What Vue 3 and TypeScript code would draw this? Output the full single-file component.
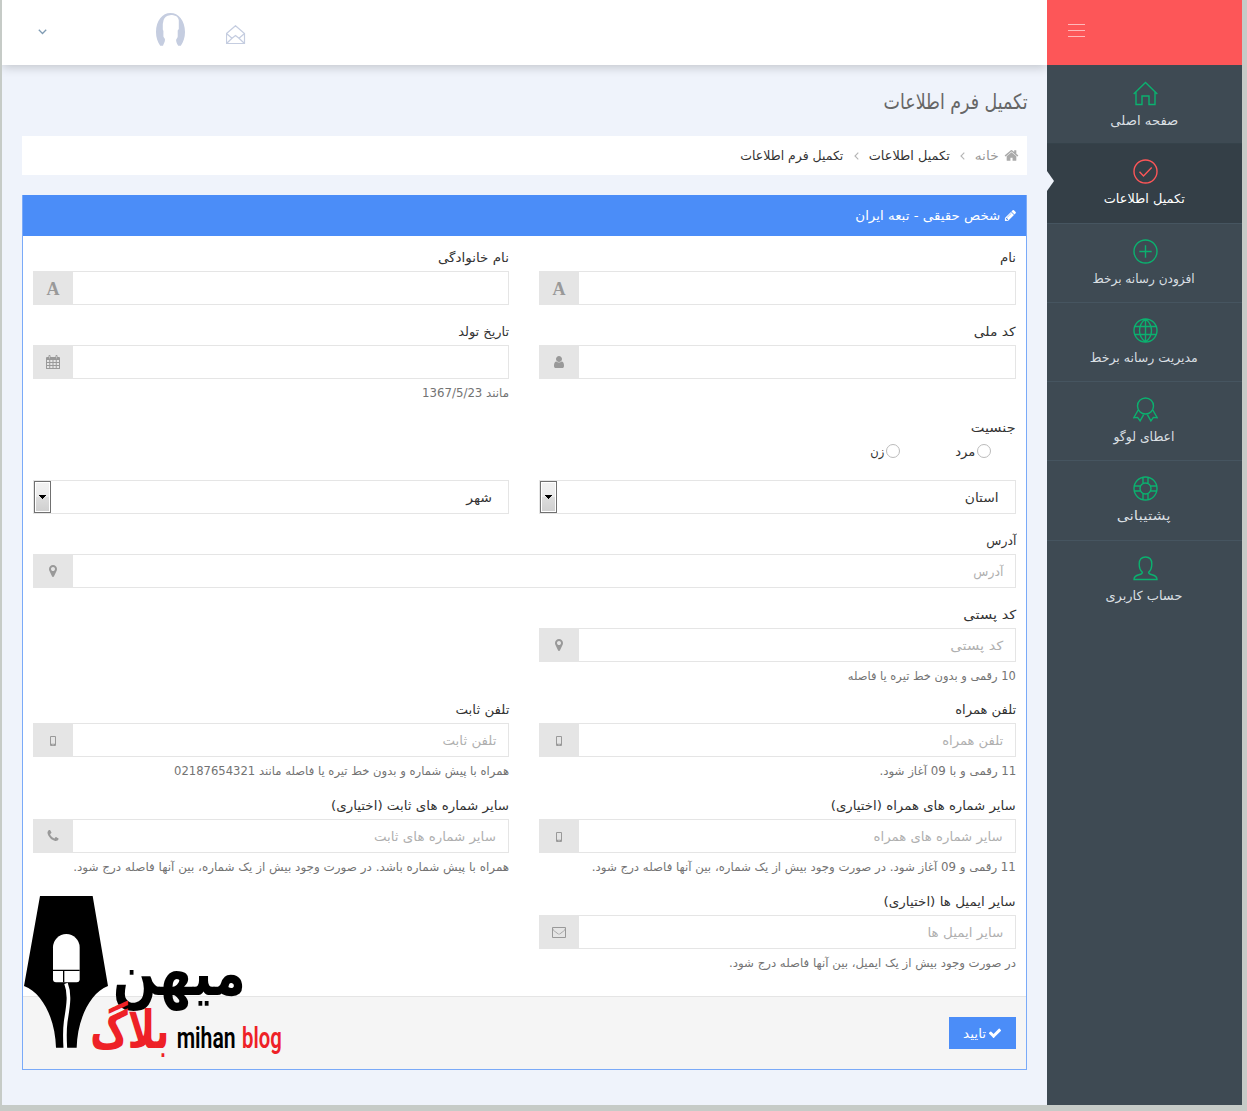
<script setup lang="ts">
interface Field {
  label: string
  labelWidth: number
  icon: string
  placeholder?: string
  placeholderWidth?: number
  help?: string
  helpWidth?: number
  wide?: boolean
  start?: boolean
}

// Condenses a run of text horizontally so that it takes the given width.
const vFit = {
  mounted(el: HTMLElement, binding: { value?: number }) {
    if (!binding.value) return
    const natural = el.getBoundingClientRect().width
    el.style.transform = `scaleX(${binding.value / natural})`
    el.style.marginLeft = `${binding.value - natural}px`
  },
}

const nav = [
  { text: 'صفحه اصلی', width: 68, icon: 'home' },
  { text: 'تکمیل اطلاعات', width: 81, icon: 'check', active: true },
  { text: 'افزودن رسانه برخط', width: 102, icon: 'plus' },
  { text: 'مدیریت رسانه برخط', width: 108, icon: 'globe' },
  { text: 'اعطای لوگو', width: 61, icon: 'award' },
  { text: 'پشتیبانی', width: 54, icon: 'help' },
  { text: 'حساب کاربری', width: 77, icon: 'user' },
]

const navPaths: Record<string, string> = {
  home: 'M.7 13.1 12.5 1.4l11.800 11.700M3 11V23.500h6v-8.500h7v8.500h6V11',
  check: 'M24 12.5a11.5 11.5 0 1 1-23 0a11.5 11.5 0 1 1 23 0M6.500 12.800l4 4.200 8.200-8.400',
  plus: 'M24 12.5a11.5 11.5 0 1 1-23 0a11.5 11.5 0 1 1 23 0M12.500 6.300v12.400M6.300 12.500h12.400',
  globe: 'M24 12.5a11.5 11.5 0 1 1-23 0a11.5 11.5 0 1 1 23 0M12.500 1v23M2 8.500h21M2 16.500h21M12.500 1C4.500 7 4.500 18 12.500 24M12.500 1c8 6 8 17 0 23',
  award: 'M20.500 9a8 8 0 1 1-16 0a8 8 0 1 1 16 0M5.200 13 .8 20.700l3.800-.3 2.500 3.500 4-7M19.800 13l4.400 7.700-3.800-.3-2.500 3.500-4-7',
  help: 'M24 12.5a11.5 11.5 0 1 1-23 0a11.5 11.5 0 1 1 23 0M18 12.500a5.500 5.500 0 1 1-11 0a5.500 5.500 0 1 1 11 0M10 1.300v6.300M15 1.300v6.300M10 17.400v6.300M15 17.400v6.300M1.300 10h6.300M1.300 15h6.300M17.400 10h6.300M17.400 15h6.300',
  user: 'M9.400 16.200C7 14.300 6.200 11.500 6.200 8 6.200 3.400 8.500 1 12.500 1s6.300 2.400 6.300 7c0 3.500-.8 6.300-3.200 8.200 0 1.400 1 2 3.400 2.600 3.500.9 5 1.800 5 4.700H1c0-2.900 1.500-3.800 5-4.700 2.400-.6 3.400-1.200 3.400-2.600z',
}

const firstRows: Field[] = [
  { label: 'نام', labelWidth: 16, icon: 'font' },
  { label: 'نام خانوادگی', labelWidth: 71, icon: 'font' },
  { label: 'کد ملی', labelWidth: 42, icon: 'user' },
  { label: 'تاریخ تولد', labelWidth: 51, icon: 'calendar', help: 'مانند 1367/5/23', helpWidth: 87 },
]

const lastRows: Field[] = [
  { label: 'آدرس', labelWidth: 30, icon: 'marker', placeholder: 'آدرس', placeholderWidth: 30, wide: true },
  { label: 'کد پستی', labelWidth: 53, icon: 'marker', placeholder: 'کد پستی', placeholderWidth: 53, help: '10 رقمی و بدون خط تیره یا فاصله', helpWidth: 168, start: true },
  { label: 'تلفن همراه', labelWidth: 61, icon: 'mobile', placeholder: 'تلفن همراه', placeholderWidth: 61, help: '11 رقمی و با 09 آغاز شود.', helpWidth: 137, start: true },
  { label: 'تلفن ثابت', labelWidth: 54, icon: 'mobile', placeholder: 'تلفن ثابت', placeholderWidth: 54, help: 'همراه با پیش شماره و بدون خط تیره یا فاصله مانند 02187654321', helpWidth: 335 },
  { label: 'سایر شماره های همراه (اختیاری)', labelWidth: 185, icon: 'mobile', placeholder: 'سایر شماره های همراه', placeholderWidth: 129, help: '11 رقمی و 09 آغاز شود. در صورت وجود بیش از یک شماره، بین آنها فاصله درج شود.', helpWidth: 424 },
  { label: 'سایر شماره های ثابت (اختیاری)', labelWidth: 178, icon: 'phone', placeholder: 'سایر شماره های ثابت', placeholderWidth: 122, help: 'همراه با پیش شماره باشد. در صورت وجود بیش از یک شماره، بین آنها فاصله درج شود.', helpWidth: 436 },
  { label: 'سایر ایمیل ها (اختیاری)', labelWidth: 132, icon: 'envelope', placeholder: 'سایر ایمیل ها', placeholderWidth: 76, help: 'در صورت وجود بیش از یک ایمیل، بین آنها فاصله درج شود.', helpWidth: 287, start: true },
]

const solid: Record<string, string> = {
  user: 'M1536 1399q0 109-62.5 187t-150.5 78h-854q-88 0-150.5-78t-62.5-187q0-85 8.5-160.5t31.5-152 58.5-131 94-89 134.5-34.5q131 128 313 128t313-128q76 0 134.5 34.5t94 89 58.5 131 31.5 152 8.5 160.5zm-256-887q0 159-112.5 271.5t-271.5 112.5-271.5-112.5-112.5-271.5 112.5-271.5 271.5-112.5 271.5 112.5 112.5 271.5z',
  marker: 'M1152 640q0-106-75-181t-181-75-181 75-75 181 75 181 181 75 181-75 75-181zm256 0q0 109-33 179l-364 774q-16 33-47.5 52t-67.5 19-67.5-19-46.5-52l-365-774q-33-70-33-179 0-212 150-362t362-150 362 150 150 362z',
  phone: 'M1600 1240q0 27-10 70.5t-21 68.5q-21 50-122 106-94 51-186 51-27 0-52.5-3.5t-57.5-12.5-47.5-14.5-55.5-20.5-49-18q-98-35-175-83-128-79-264.500-215.500t-215.500-264.500q-48-77-83-175-3-9-18-49t-20.500-55.500-14.500-47.500-12.500-57.500-3.500-52.500q0-92 51-186 56-101 106-122 25-11 68.500-21t70.500-10q14 0 21 3 18 6 53 76 11 19 30 54t35 63.500 31 53.500q3 4 17.500 25t21.500 35.500 7 28.500q0 20-28.500 50t-62 55-62 53-28.500 46q0 9 5 22.500t8.500 20.500 14 24 11.500 19q76 137 174 235t235 174q2 1 19 11.500t24 14 20.500 8.500 22.500 5q18 0 46-28.500t53-62 55-62 50-28.500q14 0 28.500 7t35.500 21.500 25 17.500q25 15 53.500 31t63.500 35 54 30q70 35 76 53 3 7 3 21z',
  mobile: 'M512 512q0-128 128-128h512q128 0 128 128v1024q0 128-128 128H640q-128 0-128-128zM640 520v870h512V520zM840 1450v110h112v-110z',
  calendar: 'M0 1728V384q0-128 128-128h192V128Q320 0 448 0t128 128v128h640V128q0-128 128-128t128 128v128h192q128 0 128 128v1344q0 64-64 64H64q-64 0-64-64zM128 640v256h288V640zm416 0v256h288V640zm416 0v256h288V640zm416 0v256h288V640zM128 1024v256h288v-256zm416 0v256h288v-256zm416 0v256h288v-256zm416 0v256h288v-256zM128 1408v256h288v-256zm416 0v256h288v-256zm416 0v256h288v-256zm416 0v256h288v-256zM416 140v300h64V140zm896 0v300h64V140z',
  envelope: 'M0 384q0-128 128-128h1536q128 0 128 128v1152q0 128-128 128H128q-128 0-128-128zM128 640v864q0 32 32 32h1472q32 0 32-32V640q-170 190-560 480-110 90-208 90t-208-90Q298 830 128 640zM128 384v40q0 170 216 330 180 130 400 310 90 80 152 80t152-80q220-180 400-310 216-160 216-330v-40z',
}
</script>

<template>
  <div class="page">
    <aside class="sidebar">
      <div class="brand"><span class="burger"><i /><i /><i /></span></div>
      <nav>
        <a v-for="item in nav" :key="item.icon" class="nav-item" :class="{ active: item.active }">
          <svg viewBox="0 0 25 25" width="25" height="25"><path :d="navPaths[item.icon]" /></svg>
          <span class="nav-text"><span v-fit="item.width" class="t">{{ item.text }}</span></span>
        </a>
      </nav>
    </aside>
    <div class="main">
      <header class="topbar">
        <svg class="chevron" viewBox="0 0 9 6" width="9" height="6"><path d="M.8.8 4.500 4.500 8.200.8" /></svg>
        <svg class="avatar" viewBox="0 0 29 33" width="29" height="33">
          <path d="M14.500 0C22.500 0 29 7.500 29 19c0 5.500-1.600 10-4.200 13.800h-2.600c-.6-1.500-2-3-2.100-5.600 0-1.400 1.600-2 1.600-3.600V17.500l1.100-1.500V7.500C22.800 5.500 21 3 19 2.800 17 1.600 15.500 1.800 14 2.300 10.500 2.800 8.500 4.500 7.600 7L6.800 11v5.500l.6 1.500v5.500c.3 1.200 1.600 1.800 1.600 3.300 0 2.400-1.600 4.200-2 6H4.200C1.600 29 0 24.500 0 19 0 7.500 6.500 0 14.500 0z" />
        </svg>
        <svg class="mail" viewBox="0 0 20 20" width="20" height="20">
          <path d="M.5 8.500 9.500.7l9 7.800V18.500H.5zM.5 8.500l5.500 4.800M18.500 8.500l-5.500 4.800M.5 18.500l5.500-5.200 3.500-2.800 3.500 2.800 5.500 5.200" />
        </svg>
      </header>
      <main class="content">
        <h1><span v-fit="144" class="t">تکمیل فرم اطلاعات</span></h1>
        <div class="crumbs">
          <svg class="house" viewBox="0 0 1792 1792" width="15" height="15"><path d="M1472 992v480q0 26-19 45t-45 19h-384v-384h-256v384h-384q-26 0-45-19t-19-45v-480q0-1 .5-3t.5-3l575-474 575 474q1 2 1 6zm223-69l-62 74q-8 9-21 11h-3q-13 0-21-7l-692-577-692 577q-12 8-24 7-13-2-21-11l-62-74q-8-10-7-23.500t11-21.500l719-599q32-26 76-26t76 26l244 204v-195q0-14 9-23t23-9h192q14 0 23 9t9 23v408l219 182q10 8 11 21.500t-7 23.500z" /></svg>
          <span v-fit="24" class="t muted">خانه</span>
          <svg class="angle" viewBox="0 0 5 8" width="5" height="8"><path d="M4.300.700 1 4l3.300 3.300" /></svg>
          <span v-fit="81" class="t">تکمیل اطلاعات</span>
          <svg class="angle second" viewBox="0 0 5 8" width="5" height="8"><path d="M4.300.700 1 4l3.300 3.300" /></svg>
          <span v-fit="103" class="t">تکمیل فرم اطلاعات</span>
        </div>
        <section class="panel">
          <div class="panel-head">
            <svg viewBox="0 0 1792 1792" width="13" height="13"><path d="M491 1536l91-91-235-235-91 91v107h128v128h107zm523-928q0-22-22-22-10 0-17 7l-542 542q-7 7-7 17 0 22 22 22 10 0 17-7l542-542q7-7 7-17zm-54-192l416 416-832 832h-416v-416zm683 96q0 53-37 90l-166 166-416-416 166-165q36-38 90-38 53 0 91 38l235 234q37 39 37 91z" /></svg>
            <span v-fit="145" class="t">شخص حقیقی - تبعه ایران</span>
          </div>
          <form class="form">
            <div v-for="f in firstRows" :key="f.label" class="group">
              <label><span v-fit="f.labelWidth" class="t">{{ f.label }}</span></label>
              <div class="control">
                <div class="box" />
                <div class="addon">
                  <b v-if="f.icon === 'font'">A</b>
                  <svg v-else viewBox="0 0 1792 1792" width="14" height="14"><path fill-rule="evenodd" :d="solid[f.icon]" /></svg>
                </div>
              </div>
              <p v-if="f.help" class="help"><span v-fit="f.helpWidth" class="t">{{ f.help }}</span></p>
            </div>
            <div class="group wide">
              <label><span v-fit="45" class="t">جنسیت</span></label>
              <div class="radios">
                <span class="radio"><i /><span v-fit="20" class="t">مرد</span></span>
                <span class="radio"><i /><span v-fit="14" class="t">زن</span></span>
              </div>
            </div>
            <div class="select"><span v-fit="34" class="t">استان</span><span class="arrow"><svg viewBox="0 0 7 4" width="7" height="4"><path d="M0 0h7v1H6v1H5v1H4v1H3V3H2V2H1V1H0z" /></svg></span></div>
            <div class="select"><span v-fit="26" class="t">شهر</span><span class="arrow"><svg viewBox="0 0 7 4" width="7" height="4"><path d="M0 0h7v1H6v1H5v1H4v1H3V3H2V2H1V1H0z" /></svg></span></div>
            <div v-for="f in lastRows" :key="f.label" class="group" :class="{ wide: f.wide, start: f.start }">
              <label><span v-fit="f.labelWidth" class="t">{{ f.label }}</span></label>
              <div class="control">
                <div class="box"><span v-fit="f.placeholderWidth" class="t">{{ f.placeholder }}</span></div>
                <div class="addon"><svg viewBox="0 0 1792 1792" width="14" height="14"><path fill-rule="evenodd" :d="solid[f.icon]" /></svg></div>
              </div>
              <p v-if="f.help" class="help"><span v-fit="f.helpWidth" class="t">{{ f.help }}</span></p>
            </div>
          </form>
          <footer>
            <button type="button">
              <svg viewBox="0 0 1792 1792" width="14" height="14"><path d="M1671 566q0 40-28 68l-724 724-136 136q-28 28-68 28t-68-28l-136-136-362-362q-28-28-28-68t28-68l136-136q28-28 68-28t68 28l294 295 656-657q28-28 68-28t68 28l136 136q28 28 28 68z" /></svg>
              <span v-fit="23" class="t">تایید</span>
            </button>
          </footer>
        </section>
      </main>
      <svg class="logo" viewBox="66 39 786 504" width="262" height="168">
        <path d="M120 48H278L324 318C268 340 232 420 230 503H168C166 420 130 340 72 318z" />
        <path d="M159 202a40 40 0 0 1 80 0V298q0 9-9 9H168q-9 0-9-9z" fill="#fff" />
        <path d="M159 271H239M191 271V307" stroke="#000" stroke-width="4" />
        <path d="M198 310C212 345 203 385 197 425Q193 455 196 505" fill="none" stroke="#fff" stroke-width="11" />
        <text class="fa" x="738" y="345" font-size="196" textLength="400" lengthAdjust="spacingAndGlyphs">میهن</text>
        <text class="fa red" x="508" y="503" font-size="156" textLength="237" lengthAdjust="spacingAndGlyphs">بلاگ</text>
        <text class="en" x="530" y="503" font-size="88" textLength="177" lengthAdjust="spacingAndGlyphs">mihan</text>
        <text class="en red" x="726" y="503" font-size="88" textLength="119" lengthAdjust="spacingAndGlyphs">blog</text>
      </svg>
    </div>
  </div>
</template>

<style>
body { margin: 0; background: #c6cbc7; }
</style>

<style scoped>
* { box-sizing: border-box; }
.page {
  direction: rtl; display: flex; width: 1240px; height: 1105px; margin: 0 0 6px 2px;
  font-family: "DejaVu Sans", sans-serif; font-size: 12.5px; color: #333; background: #eff3fb; overflow: hidden;
}
.t { display: inline-block; white-space: nowrap; transform-origin: right center; flex: none; }
.sidebar { width: 195px; background: #3e4a53; flex: none; position: relative; z-index: 1; }
.brand { height: 65px; background: #fd5658; display: flex; justify-content: flex-end; padding-top: 24px; }
.burger { display: flex; flex-direction: column; gap: 5px; margin-left: 21px; }
.burger i { width: 17px; height: 1px; background: #ffb9ba; }
.nav-item {
  display: flex; flex-direction: column; align-items: center; height: 79.3px; padding-top: 16px;
  position: relative; border-bottom: 1px solid #465560; color: #d9dfe2;
}
.nav-item:first-child { border-color: #35424a; }
.nav-item:not(:first-child) { padding-top: 15px; }
.nav-item:last-child { border: 0; }
.nav-item svg { fill: none; stroke: #0bb16f; stroke-width: 1.4; margin-right: 3px; margin-left: 0; flex: none; align-self: flex-start; margin-right: 84px; }
.nav-text { display: block; line-height: 20px; margin: 5px 0 0 0; padding-right: 1px; }
.nav-item.active { background: #343f47; color: #fff; }
.nav-item.active svg { stroke: #fd5658; }
.nav-item.active::after {
  content: ""; position: absolute; left: 0; top: 27px;
  border: solid transparent; border-width: 10.5px 0 10.5px 7px; border-left-color: #eff3fb;
}
.main { flex: 1; min-width: 0; position: relative; }
.topbar {
  height: 65px; background: #fff; box-shadow: 0 2px 10px rgba(0, 0, 0, .2);
  direction: ltr; display: flex; align-items: flex-start; padding-left: 36px;
}
.topbar svg { flex: none; }
.chevron { margin-top: 29px; fill: none; stroke: #7f9bb3; stroke-width: 1.3; }
.avatar { margin: 13px 0 0 109px; fill: #c5cde0; }
.mail { margin: 25px 0 0 41px; fill: none; stroke: #c5cde0; stroke-width: 1.2; }
.content { padding: 0 20px; }
h1 { margin: 0 -1px 0 0; height: 71px; padding-top: 20px; font-weight: 400; font-size: 21px; line-height: 34px; color: #666; }
.crumbs { height: 39px; background: #fff; display: flex; align-items: center; padding-right: 8px; }
.house { fill: #aaa; margin-left: 5px; }
.angle { fill: none; stroke: #b5b5b5; stroke-width: 1.1; margin: 0 10px; }
.second { margin-left: 11px; }
.muted { color: #999; }
.panel { margin-top: 20px; border: 1px solid #7aaaf8; background: #fff; height: 875px; display: flex; flex-direction: column; }
.panel-head {
  height: 41px; margin-top: -1px; flex: none; background: #4b8df8; color: #fff;
  display: flex; align-items: center; gap: 4px; padding-right: 9px;
}
.panel-head svg { fill: #fff; }
.form {
  flex: none; height: 760px; padding: 11px 10px 0; display: grid; grid-template-columns: 477px 476px; column-gap: 30px;
  grid-template-rows: 74px 96px 63px 50px 74px 95px 96px 96px 105px;
}
.wide { grid-column: 1 / -1; }
.start { grid-column-start: 1; }
label { display: block; height: 24px; line-height: 21px; color: #333; }
.control { display: flex; height: 34px; }
.box { flex: 1; border: 1px solid #e5e5e5; border-left: 0; padding-right: 12px; line-height: 34px; color: #b0b0b0; }
.addon { width: 40px; background: #e5e5e5; display: flex; align-items: center; justify-content: center; color: #999; }
.addon svg { fill: #999; }
.addon b { font: bold 18px "Liberation Serif", serif; padding-top: 3px; }
.help { margin: 0; height: 28px; line-height: 28px; font-size: 11.5px; color: #737373; }
.radios { display: flex; padding-right: 25px; gap: 55px; height: 20px; align-items: center; }
.radio { display: flex; align-items: center; gap: 2px; }
.radio i { width: 14px; height: 14px; border: 1px solid #bbb; border-radius: 50%; }
.select { height: 34px; border: 1px solid #e5e5e5; display: flex; justify-content: space-between; align-items: center; padding-right: 16px; }
.arrow {
  width: 17px; height: 32px; border: 1px solid #707070; box-shadow: inset 0 0 0 1px #fff;
  background: linear-gradient(#f2f2f2, #ebebeb 49%, #dddddd 50%, #cfcfcf); display: flex; align-items: center; justify-content: center;
}
footer { flex: 1; border-top: 1px solid #e5e5e5; background: #f5f5f5; padding: 20px 10px; }
button {
  width: 67px; height: 32px; border: 0; padding: 0 14px 0 0; background: #4b8df8; color: #fff; font: inherit; font-size: 12.5px;
  display: flex; align-items: center; gap: 2px;
}
button svg { fill: #fff; }
.logo { position: absolute; left: 20px; top: 893px; overflow: visible; }
.fa { font-family: "DejaVu Sans", sans-serif; font-weight: 700; direction: rtl; }
.en { font-family: Roboto, sans-serif; font-weight: 600; direction: ltr; }
.red { fill: #ee2127; }
</style>
